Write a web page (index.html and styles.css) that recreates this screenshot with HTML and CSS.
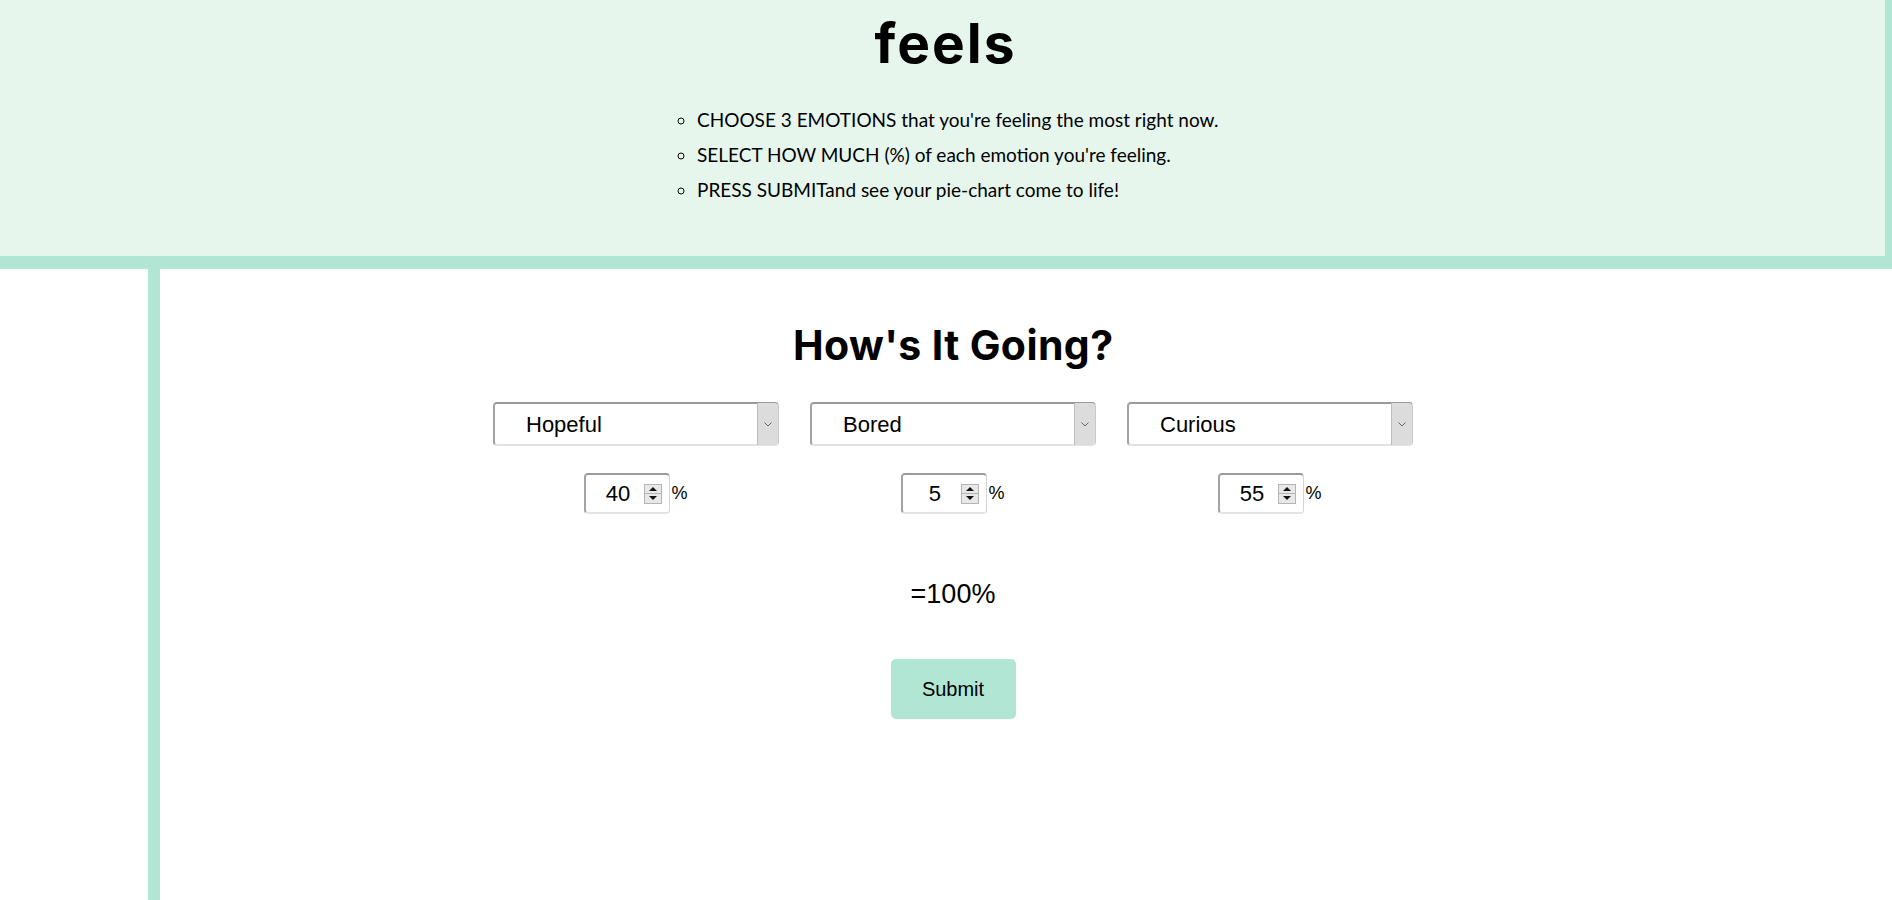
FILE: index.html
```html
<!DOCTYPE html>
<html lang="en">
<head>
<meta charset="utf-8">
<title>feels</title>
<link rel="stylesheet" href="styles.css">
</head>
<body>
<header class="intro">
  <h1 class="logo">feels</h1>
  <ul class="steps">
    <li>CHOOSE 3 EMOTIONS that you're feeling the most right now.</li>
    <li>SELECT HOW MUCH (%) of each emotion you're feeling.</li>
    <li>PRESS SUBMITand see your pie-chart come to life!</li>
  </ul>
</header>
<main class="main">
  <section class="content">
    <h2 class="title">How's It Going?</h2>
    <div class="columns">
      <div class="col">
        <div class="select">
          <select><option>Hopeful</option></select>
          <span class="arrow"><svg width="8" height="5" viewBox="0 0 8 5"><path d="M0.5 0.5 L4 4 L7.5 0.5" fill="none" stroke="#666" stroke-width="1"/></svg></span>
        </div>
        <div class="amount">
          <div class="num"><input type="text" value="40"><span class="spin"><span class="up"></span><span class="down"></span></span></div>
          <span class="pct">%</span>
        </div>
      </div>
      <div class="col">
        <div class="select">
          <select><option>Bored</option></select>
          <span class="arrow"><svg width="8" height="5" viewBox="0 0 8 5"><path d="M0.5 0.5 L4 4 L7.5 0.5" fill="none" stroke="#666" stroke-width="1"/></svg></span>
        </div>
        <div class="amount">
          <div class="num"><input type="text" value="5"><span class="spin"><span class="up"></span><span class="down"></span></span></div>
          <span class="pct">%</span>
        </div>
      </div>
      <div class="col">
        <div class="select">
          <select><option>Curious</option></select>
          <span class="arrow"><svg width="8" height="5" viewBox="0 0 8 5"><path d="M0.5 0.5 L4 4 L7.5 0.5" fill="none" stroke="#666" stroke-width="1"/></svg></span>
        </div>
        <div class="amount">
          <div class="num"><input type="text" value="55"><span class="spin"><span class="up"></span><span class="down"></span></span></div>
          <span class="pct">%</span>
        </div>
      </div>
    </div>
    <p class="total">=100%</p>
    <button class="submit" type="button">Submit</button>
  </section>
</main>
</body>
</html>
```
FILE: styles.css
```css
html, body {
  margin: 0;
  padding: 0;
  background: #ffffff;
  height: 100%;
}
body {
  display: flex;
  flex-direction: column;
  overflow: hidden;
  color: #000;
}
.intro {
  background: #e6f6ed;
  border-right: 7px solid #b2e6d4;
  border-bottom: 13px solid #b2e6d4;
  box-sizing: content-box;
  padding: 13px 0 0 0;
  height: 243px;
  display: flex;
  flex-direction: column;
  align-items: center;
}
.logo {
  margin: 0;
  padding-left: 6px;
  font-family: Inter, "Open Sans", sans-serif;
  font-weight: 700;
  font-size: 55px;
  line-height: 60px;
  letter-spacing: 2px;
}
.steps {
  margin: 29px 0 0 657px;
  padding: 0 0 0 40px;
  list-style: circle;
  font-family: Lato, "Open Sans", sans-serif;
  font-size: 19px;
  line-height: 35px;
  align-self: flex-start;
}
.main {
  flex: 1;
  margin-left: 148px;
  border-left: 12px solid #b2e6d4;
  padding-right: 146px;
  display: flex;
}
.content {
  flex: 1;
  display: flex;
  flex-direction: column;
  align-items: center;
}
.title {
  margin: 51px 0 0 0;
  padding-left: 0.4px;
  font-family: Inter, "Open Sans", sans-serif;
  font-weight: 700;
  font-size: 41px;
  line-height: 50px;
  letter-spacing: 0.4px;
}
.columns {
  margin-top: 32px;
  display: flex;
  gap: 31px;
}
.col {
  width: 286px;
  display: flex;
  flex-direction: column;
  align-items: center;
  gap: 27px;
}
.select {
  position: relative;
  width: 286px;
  height: 44px;
  box-sizing: border-box;
  border-style: solid;
  border-width: 2px 1px 2px 2px;
  border-color: #9a9a9a #c9c9c9 #e2e2e2 #a3a3a3;
  border-radius: 4px;
  background: #fff;
}
.select select {
  appearance: none;
  -webkit-appearance: none;
  border: none;
  background: transparent;
  width: 100%;
  height: 100%;
  padding: 0 0 0 31px;
  margin: 0;
  font-family: "Liberation Sans", Arial, sans-serif;
  font-size: 22px;
  color: #000;
  outline: none;
}
.arrow {
  position: absolute;
  top: -1px;
  right: 0;
  bottom: -1px;
  width: 20px;
  background: #dcdcdc;
  border-left: 1px solid #bdbdbd;
  border-radius: 0 3px 3px 0;
  display: flex;
  align-items: center;
  justify-content: center;
}
.amount {
  display: flex;
  align-items: center;
}
.num {
  width: 86px;
  height: 41px;
  box-sizing: border-box;
  border-style: solid;
  border-width: 2px 1px 2px 2px;
  border-color: #9a9a9a #d4d4d4 #e4e4e4 #a3a3a3;
  border-radius: 4px;
  display: flex;
  align-items: center;
  padding: 0 7px 0 5px;
}
.num input {
  flex: 1;
  min-width: 0;
  border: none;
  outline: none;
  background: transparent;
  text-align: center;
  padding: 0;
  font-family: "Liberation Sans", Arial, sans-serif;
  font-size: 22px;
  color: #000;
}
.spin {
  width: 18px;
  height: 20px;
  box-sizing: border-box;
  border: 1px solid #b4b4b4;
  background: #e8e8e8;
  display: flex;
  flex-direction: column;
}
.spin .up, .spin .down {
  flex: 1;
  display: flex;
  align-items: center;
  justify-content: center;
}
.spin .up {
  border-bottom: 1px solid #b4b4b4;
}
.spin .up::before {
  content: "";
  border-left: 4px solid transparent;
  border-right: 4px solid transparent;
  border-bottom: 4px solid #111;
}
.spin .down::before {
  content: "";
  border-left: 4px solid transparent;
  border-right: 4px solid transparent;
  border-top: 4px solid #111;
}
.pct {
  margin-left: 1px;
  font-family: "Liberation Sans", Arial, sans-serif;
  font-size: 18px;
}
.total {
  margin: 64px 0 0 0;
  font-family: "Liberation Sans", Arial, sans-serif;
  font-size: 27px;
  line-height: 32px;
}
.submit {
  margin-top: 49px;
  width: 125px;
  height: 60px;
  border: none;
  border-radius: 5px;
  background: #b2e6d4;
  font-family: "Liberation Sans", Arial, sans-serif;
  font-size: 20px;
  color: #000;
  padding: 0;
}
```
